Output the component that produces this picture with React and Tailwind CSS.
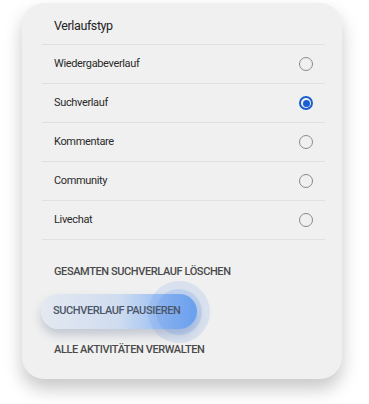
import React from 'react';

const options = [
  { label: 'Wiedergabeverlauf', checked: false },
  { label: 'Suchverlauf', checked: true },
  { label: 'Kommentare', checked: false },
  { label: 'Community', checked: false },
  { label: 'Livechat', checked: false },
];

function Radio({ checked }) {
  return checked ? (
    <span className="w-[14px] h-[14px] rounded-full border-[2px] border-[#1a5fd0] flex items-center justify-center">
      <span className="w-[7px] h-[7px] rounded-full bg-[#1a5fd0]" />
    </span>
  ) : (
    <span className="w-[14px] h-[14px] rounded-full border border-[#8a8a8a]" />
  );
}

export default function App() {
  return (
    <div className="w-[369px] h-[404px] bg-white pt-[3px] pl-[22px] font-['Roboto',sans-serif]">
      <div className="w-[320px] h-[376px] bg-[#f0f0f0] rounded-[22px] shadow-[0_10px_18px_rgba(0,0,0,0.22)] pt-[15px] pl-[20px] pr-[17px]">
        {/* Header */}
        <div className="h-[27px] border-b border-[#e0e0e0] pl-[12px] text-[12.5px] text-[#222] leading-[16px] tracking-[-0.4px]">
          Verlaufstyp
        </div>

        {/* Options */}
        {options.map((o) => (
          <div
            key={o.label}
            className="h-[39px] border-b border-[#e0e0e0] flex items-center justify-between pl-[12px] pr-[12px]"
          >
            <span className="text-[11px] text-[#2a2a2a] tracking-[-0.35px]">{o.label}</span>
            <Radio checked={o.checked} />
          </div>
        ))}

        {/* Actions */}
        <div className="pt-[24px] pl-[12px] text-[11px] font-medium text-[#4a4a4a] tracking-[-0.4px]">
          GESAMTEN SUCHVERLAUF LÖSCHEN
        </div>

        <div className="relative mt-[13px] -ml-[1px] w-[156px] h-[35px] rounded-full bg-gradient-to-r from-[#e4e9f1] via-[#cfdcef] to-[#72a8f4] shadow-[0_6px_10px_rgba(60,80,120,0.25)] flex items-center pl-[12px]">
          <span className="absolute left-[107px] top-[-13px] w-[62px] h-[62px] rounded-full bg-[#5a8fe6]/15" />
          <span className="absolute left-[115px] top-[-5px] w-[46px] h-[46px] rounded-full bg-[#5a8fe6]/20" />
          <span className="relative text-[11px] font-medium text-[#4b5568] tracking-[-0.4px]">
            SUCHVERLAUF PAUSIEREN
          </span>
        </div>

        <div className="pt-[13px] pl-[12px] text-[11px] font-medium text-[#4a4a4a] tracking-[-0.4px]">
          ALLE AKTIVITÄTEN VERWALTEN
        </div>
      </div>
    </div>
  );
}
